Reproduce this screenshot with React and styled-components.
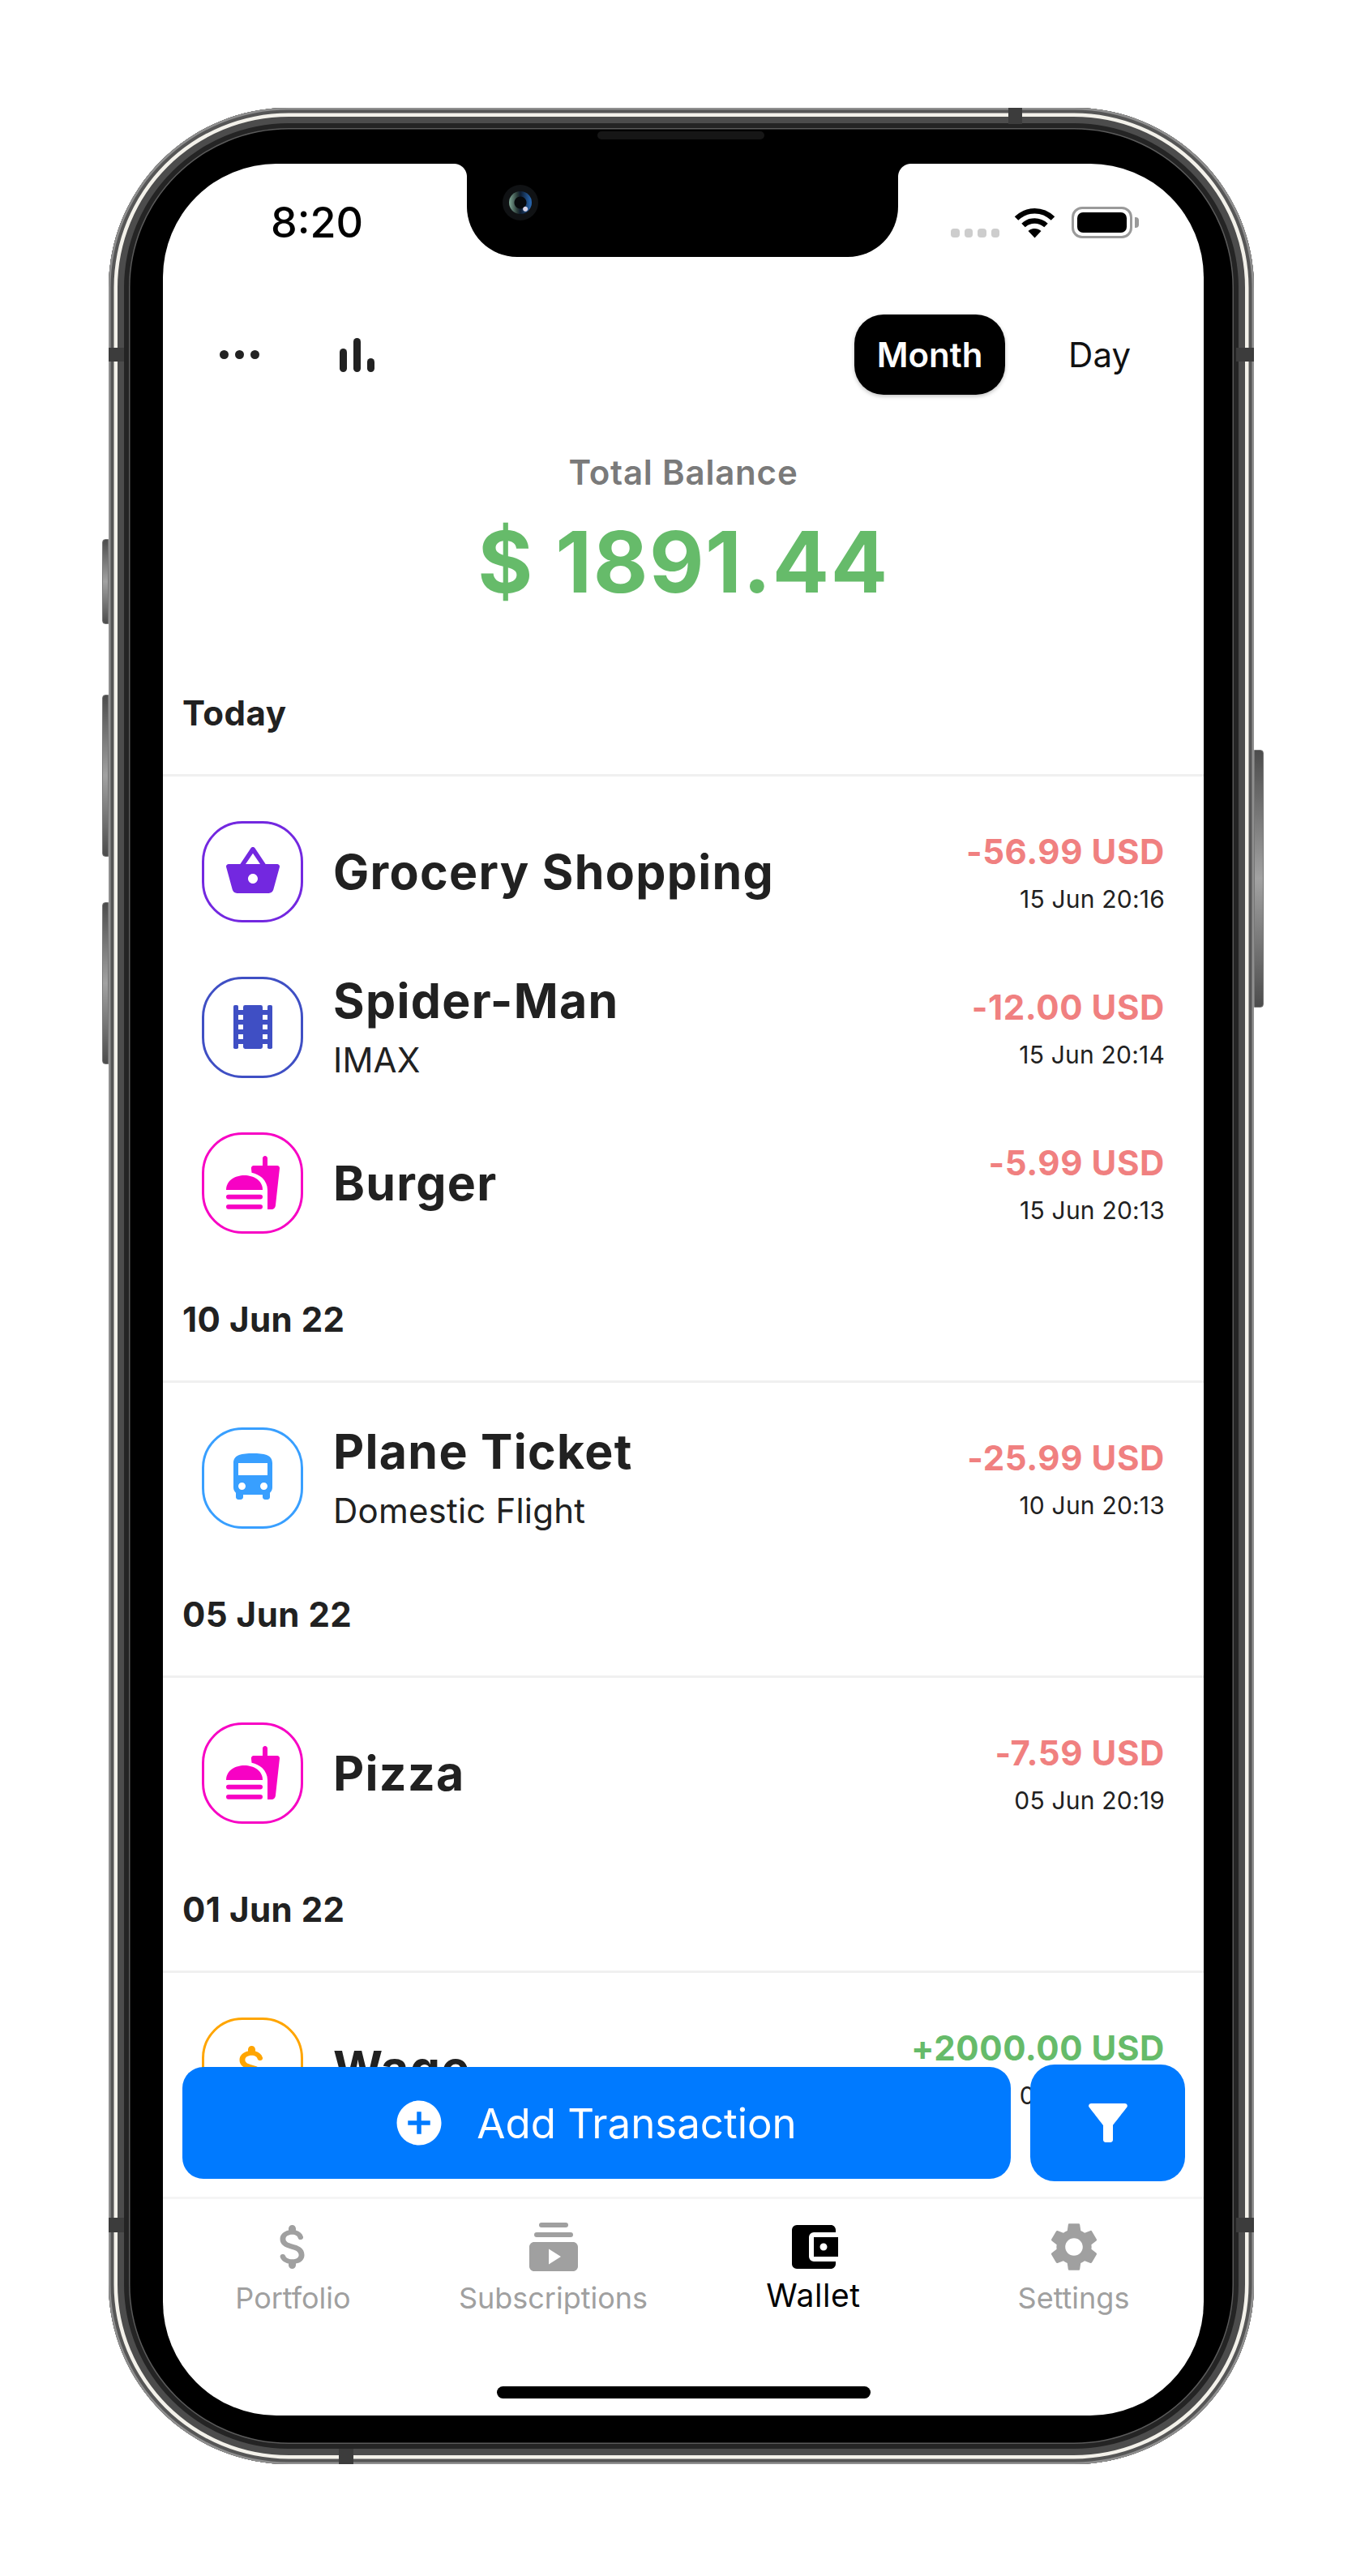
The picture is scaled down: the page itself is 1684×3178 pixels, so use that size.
import React from "react";
import styled, { createGlobalStyle } from "styled-components";
import {
  MdDirectionsBus,
  MdAccountBalanceWallet,
  MdSettings,
  MdAddCircle,
} from "react-icons/md";

const GlobalStyle = createGlobalStyle`
  html, body {
    margin: 0;
    padding: 0;
    background: #fff;
    font-family: "Inter", "Liberation Sans", sans-serif;
  }
  * { box-sizing: border-box; }
`;

// Device mockup
const Page = styled.div`
  width: 1684px;
  height: 3178px;
  padding: 133px 0 0 134px;
  overflow: hidden;
`;

const Bezel = styled.div`
  position: relative;
  width: 1413px;
  height: 2907px;
  padding: 69px 62px 60px 67px;
  background: #000;
  border-radius: 222px;
  box-shadow:
    inset 0 0 0 2.5px #8f8f8f,
    inset 0 0 0 6.5px #565656,
    inset 0 0 0 11px #f3f1ea,
    inset 0 0 0 19px #4c4c4c,
    inset 0 0 0 25px #242424,
    inset 0 0 0 26.5px #5a5a5a;
`;

const SideButton = styled.div`
  position: absolute;
  top: ${(p) => p.$top}px;
  height: ${(p) => p.$height}px;
  width: ${(p) => (p.$right ? 12 : 8)}px;
  ${(p) => (p.$right ? "right: -12px;" : "left: -8px;")}
  border: 1px solid #777;
  border-radius: ${(p) => (p.$right ? "0 4px 4px 0" : "4px 0 0 4px")};
  background: linear-gradient(180deg, #4c4c4c 0%, #a2a2a2 50%, #4c4c4c 100%);
`;

const Antenna = styled.div`
  position: absolute;
  background: #3c3c3c;
  ${(p) => p.$place}
`;

const Speaker = styled.div`
  position: absolute;
  left: 603px;
  top: 29px;
  width: 206px;
  height: 10px;
  border-radius: 5px;
  background: #161616;
`;

const Screen = styled.div`
  position: relative;
  display: flex;
  flex-direction: column;
  width: 1284px;
  height: 2778px;
  border-radius: 140px;
  overflow: hidden;
  background: #fff;
`;

const Notch = styled.div`
  position: absolute;
  top: 0;
  left: 375px;
  width: 532px;
  height: 115px;
  background: #000;
  border-radius: 0 0 62px 62px;
  z-index: 5;

  &::before,
  &::after {
    content: "";
    position: absolute;
    top: 0;
    width: 16px;
    height: 16px;
  }
  &::before {
    left: -16px;
    background: radial-gradient(circle at 0 100%, transparent 15.5px, #000 16.5px);
  }
  &::after {
    right: -16px;
    background: radial-gradient(circle at 100% 100%, transparent 15.5px, #000 16.5px);
  }
`;

const Camera = styled.div`
  position: absolute;
  left: 44px;
  top: 26px;
  width: 44px;
  height: 44px;
  border-radius: 50%;
  background: #101214;
  display: flex;
  align-items: center;
  justify-content: center;
`;

const Lens = styled.div`
  width: 28px;
  height: 28px;
  border-radius: 50%;
  background:
    radial-gradient(circle at 72% 78%, #d8d4e8 0 2.5px, transparent 3.5px),
    radial-gradient(circle at 50% 50%, #07090c 0 7px, transparent 8px),
    linear-gradient(90deg, #7fa896 0%, #2a3b38 36%, #0d1b2e 50%, #2a6bb8 100%);
`;

// Status bar
const StatusBar = styled.div`
  flex: none;
  height: 186px;
  display: flex;
  align-items: flex-start;
  justify-content: space-between;
  padding: 44px 88px 0 133px;
`;

const Time = styled.div`
  font-size: 52px;
  line-height: 58px;
  font-weight: 500;
  color: #000;
`;

const StatusIcons = styled.div`
  display: flex;
  align-items: flex-end;
  height: 40px;
  margin-top: 8px;
`;

const SignalDots = styled.div`
  display: flex;
  gap: 6px;
  margin: 0 18px 1px 0;
`;

const SignalDot = styled.span`
  width: 10.5px;
  height: 11px;
  border-radius: 4px;
  background: #cdcdcd;
`;

const Battery = styled.div`
  position: relative;
  width: 75px;
  height: 39px;
  margin-left: 20px;
  padding: 4px;
  border: 3px solid #9a9a9a;
  border-radius: 13px;

  &::after {
    content: "";
    position: absolute;
    right: -11px;
    top: 10px;
    width: 5px;
    height: 13px;
    border-radius: 0 4px 4px 0;
    background: #9a9a9a;
  }
`;

const BatteryLevel = styled.div`
  width: 100%;
  height: 100%;
  border-radius: 7px;
  background: #000;
`;

// Top controls
const Toolbar = styled.div`
  flex: none;
  height: 99px;
  display: flex;
  align-items: center;
  padding: 0 90px 0 70px;
`;

const Dots = styled.div`
  display: flex;
  gap: 8px;
  margin-right: 99px;
`;

const Dot = styled.span`
  width: 11px;
  height: 11px;
  border-radius: 50%;
  background: #222;
`;

const Bars = styled.div`
  display: flex;
  align-items: flex-end;
  gap: 8px;
  height: 42px;
  margin-top: 0;
`;

const Bar = styled.span`
  width: 9px;
  height: ${(p) => p.$height}px;
  border-radius: 4.5px;
  background: #222;
`;

const PeriodSwitch = styled.div`
  margin-left: auto;
  display: flex;
  align-items: center;
  gap: 78px;
`;

const PeriodOption = styled.div`
  font-size: 42px;
  line-height: 99px;
  ${(p) =>
    p.$active
      ? `
    width: 186px;
    height: 99px;
    text-align: center;
    font-weight: 600;
    color: #fff;
    background: #000;
    border-radius: 36px;
    box-shadow: 0 2px 5px rgba(0, 0, 0, 0.25);
  `
      : `
    color: #111;
    font-weight: 400;
  `}
`;

// Balance
const BalanceBlock = styled.div`
  flex: none;
  margin-top: 71px;
  text-align: center;
`;

const BalanceLabel = styled.div`
  font-size: 42px;
  line-height: 50px;
  font-weight: 600;
  letter-spacing: 0.8px;
  color: #7a7a7a;
`;

const BalanceValue = styled.div`
  margin-top: 25px;
  font-size: 104px;
  line-height: 120px;
  font-weight: 700;
  letter-spacing: 1.6px;
  color: #66bb6a;
`;

// Transactions
const Main = styled.div`
  position: relative;
  flex: 1;
  min-height: 0;
  overflow: hidden;
`;

const Feed = styled.div`
  margin-top: 54px;
`;

const SectionHeading = styled.div`
  height: 151px;
  padding: 48px 24px 0;
  border-bottom: 3px solid #f0f0f0;
  font-size: 42px;
  line-height: 50px;
  font-weight: 700;
  letter-spacing: 0.5px;
  color: #212121;
`;

const RowList = styled.div`
  padding-top: 21px;
`;

const Row = styled.div`
  height: 192px;
  display: flex;
  align-items: center;
  padding: 0 48px;
`;

const IconBox = styled.div`
  flex: none;
  width: 125px;
  height: 125px;
  display: flex;
  align-items: center;
  justify-content: center;
  border: 3px solid ${(p) => p.$color};
  border-radius: 50px;
  color: ${(p) => p.$color};
`;

const RowText = styled.div`
  flex: 1;
  min-width: 0;
  margin-left: 37px;
  padding-top: 2px;
`;

const RowTitle = styled.div`
  font-size: 59px;
  line-height: 64px;
  font-weight: 700;
  letter-spacing: 1.3px;
  color: #212121;
`;

const RowSubtitle = styled.div`
  margin-top: 16px;
  font-size: 42px;
  line-height: 50px;
  font-weight: 400;
  letter-spacing: 0.2px;
  color: #212121;
`;

const RowMeta = styled.div`
  padding-top: 2px;
  text-align: right;
`;

const Amount = styled.div`
  font-size: 42px;
  line-height: 54px;
  font-weight: 700;
  letter-spacing: 0.6px;
  color: ${(p) => (p.$income ? "#66bb6a" : "#f08080")};
`;

const RowDate = styled.div`
  margin-top: 11px;
  font-size: 30px;
  line-height: 40px;
  letter-spacing: 0.2px;
  color: #212121;
`;

// Floating buttons
const FloatingActions = styled.div`
  position: absolute;
  left: 24px;
  right: 23px;
  bottom: 19px;
  display: flex;
  align-items: center;
  gap: 24px;
`;

const AddButton = styled.div`
  flex: 1;
  height: 138px;
  display: flex;
  align-items: center;
  justify-content: center;
  gap: 38px;
  padding-right: 5px;
  background: #007aff;
  border-radius: 26px;
  color: #fff;
  font-size: 51px;
  font-weight: 400;
`;

const FilterButton = styled.div`
  flex: none;
  width: 191px;
  height: 144px;
  display: flex;
  align-items: center;
  justify-content: center;
  background: #007aff;
  border-radius: 30px;
  color: #fff;
`;

// Tab bar
const TabBar = styled.div`
  position: relative;
  flex: none;
  height: 270px;
  display: grid;
  grid-template-columns: repeat(4, 1fr);
  padding-top: 23px;
  border-top: 3px solid #f5f5f5;
`;

const Tab = styled.div`
  display: flex;
  flex-direction: column;
  align-items: center;
  color: ${(p) => (p.$active ? "#000" : "#a0a0a0")};
`;

const TabLabel = styled.div`
  margin-top: ${(p) => (p.$active ? 2 : 5)}px;
  font-size: ${(p) => (p.$active ? 39 : 36)}px;
  line-height: 44px;
  letter-spacing: ${(p) => (p.$active ? 0.6 : 0)}px;
`;

const HomeIndicator = styled.div`
  position: absolute;
  left: 412px;
  bottom: 21px;
  width: 461px;
  height: 15px;
  border-radius: 8px;
  background: #000;
`;

// Hand drawn icons, same 24 unit grid as the material ones
const Svg = ({ size = 72, children }) => (
  <svg width={size} height={size} viewBox="0 0 24 24" fill="currentColor">
    {children}
  </svg>
);

const BasketIcon = () => (
  <Svg>
    <path d="M17.21 9l-4.38-6.56c-.19-.28-.51-.42-.83-.42-.32 0-.64.14-.83.43L6.79 9H2c-.55 0-1 .45-1 1 0 .09.01.18.04.27l2.54 9.27c.23.84 1 1.46 1.92 1.46h13c.92 0 1.69-.62 1.93-1.46l2.54-9.27L23 10c0-.55-.45-1-1-1h-4.79zM9 9l3-4.4L15 9H9zm3 8c-1.1 0-2-.9-2-2s.9-2 2-2 2 .9 2 2-.9 2-2 2z" />
  </Svg>
);

const DollarIcon = () => (
  <Svg>
    <path d="M11.8 10.9c-2.27-.59-3-1.2-3-2.15 0-1.09 1.01-1.85 2.7-1.85 1.42 0 2.13.54 2.39 1.4.12.4.45.7.87.7h.3c.66 0 1.13-.65.9-1.27-.42-1.18-1.4-2.16-2.96-2.54V4.5c0-.83-.67-1.5-1.5-1.5S10 3.67 10 4.5v.66c-1.94.42-3.5 1.68-3.5 3.61 0 2.31 1.91 3.46 4.7 4.13 2.5.6 3 1.48 3 2.41 0 .69-.49 1.79-2.7 1.79-1.65 0-2.5-.59-2.83-1.43-.15-.39-.49-.67-.9-.67h-.28c-.67 0-1.14.68-.89 1.3.57 1.39 1.9 2.21 3.4 2.53v.67c0 .83.67 1.5 1.5 1.5s1.5-.67 1.5-1.5v-.65c1.95-.37 3.5-1.5 3.5-3.55 0-2.84-2.43-3.81-4.7-4.4z" />
  </Svg>
);

const FilmIcon = () => (
  <Svg>
    <rect x="4" y="3" width="2" height="18" rx="0.6" />
    <rect x="18" y="3" width="2" height="18" rx="0.6" />
    <rect x="8" y="3" width="8" height="18" rx="0.8" />
    <path d="M5 5h4v2H5zM5 9h4v2H5zM5 13h4v2H5zM5 17h4v2H5zM15 5h4v2h-4zM15 9h4v2h-4zM15 13h4v2h-4zM15 17h4v2h-4z" />
  </Svg>
);

const FoodIcon = () => (
  <Svg>
    <path d="M1 15c0-4 3.75-6 7.5-6S16 11 16 15H1z" />
    <rect x="1" y="16.9" width="15" height="1.9" rx="0.95" />
    <rect x="1" y="21" width="15" height="1.9" rx="0.95" />
    <path d="M18 5V2c0-.55-.45-1-1-1s-1 .45-1 1v3h-3.7c-.59 0-1 .5-1 1.1l.2 1.8c1.7.4 3.2 1.1 4.3 2.1 1.4 1.4 2.2 3.1 2.2 5V23h1.7c.84 0 1.5-.65 1.6-1.5L23 6.1c.05-.6-.4-1.1-1-1.1h-4z" />
  </Svg>
);

const SubscriptionsIcon = () => (
  <Svg>
    <rect x="6" y="2" width="12" height="2" rx="1" />
    <rect x="4" y="6" width="16" height="2" rx="1" />
    <path d="M4 10h16c1.1 0 2 .9 2 2v8c0 1.1-.9 2-2 2H4c-1.1 0-2-.9-2-2v-8c0-1.1.9-2 2-2zm6 2.8v6.4l5-3.2-5-3.2z" fillRule="evenodd" />
  </Svg>
);

const FunnelIcon = () => (
  <Svg>
    <path d="M4.25 5.61C6.27 8.2 10 13 10 13v6c0 .55.45 1 1 1h2c.55 0 1-.45 1-1v-6s3.72-4.8 5.74-7.39c.51-.66.04-1.61-.79-1.61H5.04c-.83 0-1.3.95-.79 1.61z" />
  </Svg>
);

const WifiIcon = () => (
  <svg width="51" height="38" viewBox="0 0 51 38" fill="none" stroke="#000" strokeWidth="6.5">
    <path d="M3 13.5C16 1 35 1 48 13.5" />
    <path d="M11.5 22C19.5 14.5 31.5 14.5 39.5 22" />
    <path d="M25.5 37.5L17.5 29C22 25 29 25 33.5 29L25.5 37.5Z" fill="#000" stroke="none" />
  </svg>
);

const basket = { icon: <BasketIcon />, color: "#7328e0" };
const film = { icon: <FilmIcon />, color: "#3f4fc4" };
const food = { icon: <FoodIcon />, color: "#f702c4" };
const bus = { icon: <MdDirectionsBus size={72} />, color: "#389fff" };
const wage = { icon: <DollarIcon />, color: "#ffa500" };

const SECTIONS = [
  {
    label: "Today",
    rows: [
      { ...basket, title: "Grocery Shopping", amount: "-56.99 USD", date: "15 Jun 20:16" },
      { ...film, title: "Spider-Man", subtitle: "IMAX", amount: "-12.00 USD", date: "15 Jun 20:14" },
      { ...food, title: "Burger", amount: "-5.99 USD", date: "15 Jun 20:13" },
    ],
  },
  {
    label: "10 Jun 22",
    rows: [
      { ...bus, title: "Plane Ticket", subtitle: "Domestic Flight", amount: "-25.99 USD", date: "10 Jun 20:13" },
    ],
  },
  {
    label: "05 Jun 22",
    rows: [{ ...food, title: "Pizza", amount: "-7.59 USD", date: "05 Jun 20:19" }],
  },
  {
    label: "01 Jun 22",
    rows: [{ ...wage, title: "Wage", amount: "+2000.00 USD", income: true, date: "01 Jun 20:15" }],
  },
];

const TABS = [
  { label: "Portfolio", icon: <DollarIcon /> },
  { label: "Subscriptions", icon: <SubscriptionsIcon /> },
  { label: "Wallet", icon: <MdAccountBalanceWallet size={72} />, active: true },
  { label: "Settings", icon: <MdSettings size={72} /> },
];

const App = () => {
  return (
    <Page>
      <GlobalStyle />
      <Bezel>
        <SideButton $top={532} $height={105} />
        <SideButton $top={724} $height={200} />
        <SideButton $top={980} $height={200} />
        <SideButton $right $top={792} $height={318} />
        <Antenna $place="left: 0; top: 296px; width: 19px; height: 17px;" />
        <Antenna $place="right: 0; top: 296px; width: 22px; height: 17px;" />
        <Antenna $place="left: 0; top: 2603px; width: 19px; height: 18px;" />
        <Antenna $place="right: 0; top: 2603px; width: 22px; height: 18px;" />
        <Antenna $place="left: 1110px; top: 0; width: 17px; height: 20px;" />
        <Antenna $place="left: 284px; bottom: 0; width: 18px; height: 19px;" />
        <Speaker />
        <Screen>
          <Notch>
            <Camera>
              <Lens />
            </Camera>
          </Notch>
          <StatusBar>
            <Time>8:20</Time>
            <StatusIcons>
              <SignalDots>
                <SignalDot />
                <SignalDot />
                <SignalDot />
                <SignalDot />
              </SignalDots>
              <WifiIcon />
              <Battery>
                <BatteryLevel />
              </Battery>
            </StatusIcons>
          </StatusBar>
          <Toolbar>
            <Dots>
              <Dot />
              <Dot />
              <Dot />
            </Dots>
            <Bars>
              <Bar $height={29} />
              <Bar $height={42} />
              <Bar $height={17} />
            </Bars>
            <PeriodSwitch>
              <PeriodOption $active>Month</PeriodOption>
              <PeriodOption>Day</PeriodOption>
            </PeriodSwitch>
          </Toolbar>
          <Main>
            <BalanceBlock>
              <BalanceLabel>Total Balance</BalanceLabel>
              <BalanceValue>$ 1891.44</BalanceValue>
            </BalanceBlock>
            <Feed>
              {SECTIONS.map((section) => (
                <div key={section.label}>
                  <SectionHeading>{section.label}</SectionHeading>
                  <RowList>
                    {section.rows.map((row) => (
                      <Row key={row.title}>
                        <IconBox $color={row.color}>{row.icon}</IconBox>
                        <RowText>
                          <RowTitle>{row.title}</RowTitle>
                          {row.subtitle && <RowSubtitle>{row.subtitle}</RowSubtitle>}
                        </RowText>
                        <RowMeta>
                          <Amount $income={row.income}>{row.amount}</Amount>
                          <RowDate>{row.date}</RowDate>
                        </RowMeta>
                      </Row>
                    ))}
                  </RowList>
                </div>
              ))}
            </Feed>
            <FloatingActions>
              <AddButton>
                <MdAddCircle size={66} />
                Add Transaction
              </AddButton>
              <FilterButton>
                <FunnelIcon />
              </FilterButton>
            </FloatingActions>
          </Main>
          <TabBar>
            {TABS.map((tab) => (
              <Tab key={tab.label} $active={tab.active}>
                {tab.icon}
                <TabLabel $active={tab.active}>{tab.label}</TabLabel>
              </Tab>
            ))}
            <HomeIndicator />
          </TabBar>
        </Screen>
      </Bezel>
    </Page>
  );
};

export default App;
